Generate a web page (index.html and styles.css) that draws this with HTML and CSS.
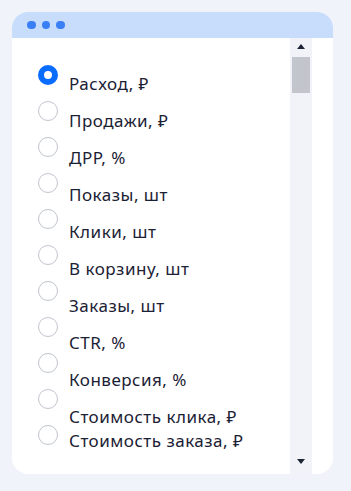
FILE: index.html
```html
<!DOCTYPE html>
<html lang="ru">
<head>
<meta charset="utf-8">
<link rel="stylesheet" href="styles.css">
</head>
<body>
<div class="card">
  <div class="card-header">
    <span class="dot"></span><span class="dot"></span><span class="dot"></span>
  </div>
  <div class="card-body">
    <div class="options">
      <div class="radios">
        <span class="radio checked"></span>
        <span class="radio"></span>
        <span class="radio"></span>
        <span class="radio"></span>
        <span class="radio"></span>
        <span class="radio"></span>
        <span class="radio"></span>
        <span class="radio"></span>
        <span class="radio"></span>
        <span class="radio"></span>
        <span class="radio"></span>
      </div>
      <div class="labels">
        <div class="label">Расход, ₽</div>
        <div class="label">Продажи, ₽</div>
        <div class="label">ДРР, %</div>
        <div class="label">Показы, шт</div>
        <div class="label">Клики, шт</div>
        <div class="label">В корзину, шт</div>
        <div class="label">Заказы, шт</div>
        <div class="label">CTR, %</div>
        <div class="label">Конверсия, %</div>
        <div class="label">Стоимость клика, ₽</div>
        <div class="label label-last">Стоимость заказа, ₽</div>
      </div>
    </div>
    <div class="scrollbar">
      <span class="arrow arrow-up"></span>
      <span class="thumb"></span>
      <span class="track-fill"></span>
      <span class="arrow arrow-down"></span>
    </div>
    <div class="right-pad"></div>
  </div>
</div>
</body>
</html>
```
FILE: styles.css
```css
* { box-sizing: border-box; }
html, body { margin: 0; padding: 0; }
body {
  background: #f0f3f9;
  padding: 12px 18px 17px 12px;
  font-family: "Noto Sans", "Liberation Sans", sans-serif;
  color: #1b2134;
}
.card {
  width: 321px;
  height: 462px;
  background: #ffffff;
  border-radius: 16px;
  overflow: hidden;
  display: flex;
  flex-direction: column;
}
.card-header {
  height: 26px;
  background: #c8dcfc;
  display: flex;
  align-items: center;
  gap: 6px;
  padding-left: 15px;
  flex: none;
}
.dot {
  width: 8.5px;
  height: 8.5px;
  border-radius: 50%;
  background: #3b7ff6;
}
.card-body {
  flex: 1;
  display: flex;
  min-height: 0;
}
.options {
  flex: 1;
  display: flex;
  padding: 27px 0 0 26px;
}
.radios {
  display: flex;
  flex-direction: column;
  gap: 16px;
  width: 20px;
}
.radio {
  width: 20px;
  height: 20px;
  border-radius: 50%;
  border: 1.5px solid #bfc4cd;
  background: #fff;
}
.radio.checked {
  border: 6px solid #0a6bff;
}
.labels {
  margin-left: 11px;
  padding-top: 0;
  display: flex;
  flex-direction: column;
}
.label {
  font-size: 17px;
  letter-spacing: 0.5px;
  line-height: 37px;
  height: 37px;
  white-space: nowrap;
}
.label-last { margin-top: -13px; }
.scrollbar {
  width: 22px;
  background: #f1f3f8;
  display: flex;
  flex-direction: column;
  align-items: center;
  padding: 6px 0 10px;
  flex: none;
}
.arrow {
  width: 0;
  height: 0;
  border-left: 4.5px solid transparent;
  border-right: 4.5px solid transparent;
}
.arrow-up { border-bottom: 5px solid #1d2433; }
.arrow-down { border-top: 5px solid #1d2433; }
.thumb {
  width: 18px;
  height: 36px;
  background: #c2c5cc;
  margin-top: 8px;
}
.track-fill { flex: 1; }
.right-pad {
  width: 21px;
  flex: none;
}
```
